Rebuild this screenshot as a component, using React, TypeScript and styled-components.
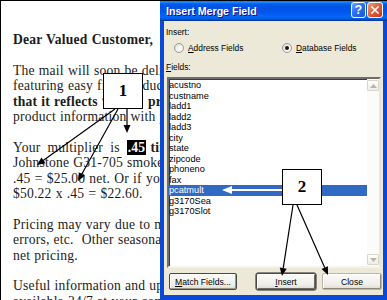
import styled, { createGlobalStyle } from 'styled-components';

const GlobalStyle = createGlobalStyle`
  html, body { margin: 0; padding: 0; background: #fff; }
  body { width: 387px; height: 300px; overflow: hidden; }
`;

const fields = [
  'acustno', 'custname', 'ladd1', 'ladd2', 'ladd3', 'city', 'state',
  'zipcode', 'phoneno', 'fax', 'pcatmult', 'g3170Sea', 'g3170Slot',
];
const selected = 'pcatmult';

type Arrow = { x1: number, y1: number, x2: number, y2: number, white?: boolean };

const arrows: Arrow[] = [
  { x1: 115, y1: 109, x2: 37, y2: 165 },
  { x1: 118, y1: 109, x2: 78, y2: 181 },
  { x1: 127, y1: 109, x2: 127, y2: 133 },
  { x1: 293, y1: 205, x2: 282, y2: 276 },
  { x1: 297, y1: 205, x2: 328, y2: 275 },
  { x1: 282, y1: 190, x2: 222, y2: 190, white: true },
];

// arrow head triangle + where the shaft stops
const headOf = ({ x1, y1, x2, y2 }: Arrow, len = 8, w = 3.5) => {
  const a = Math.atan2(y2 - y1, x2 - x1);
  const bx = x2 - len * Math.cos(a);
  const by = y2 - len * Math.sin(a);
  const px = -Math.sin(a) * w;
  const py = Math.cos(a) * w;
  return { bx, by, points: `${x2},${y2} ${bx + px},${by + py} ${bx - px},${by - py}` };
};

export default function App() {
  return (
    <>
      <GlobalStyle />
      <Screen>
        <Letter>
          <Para><Bold>Dear Valued Customer,</Bold></Para>
          <Para>
            <Line>The mail will soon be delivering our new catalog</Line>
            <Line>featuring easy find product pages. We have made sure</Line>
            <Line><Bold>that it reflects “your” pricing</Bold> by including</Line>
            <Line>product information with your multiplier.</Line>
          </Para>
          <Para>
            <Line $spread={3.5}>Your multiplier is <Highlight>.45</Highlight><Bold> times</Bold> the list price. For example:</Line>
            <Line>Johnstone G31-705 smoke detector lists for $55.78 x</Line>
            <Line>.45 = $25.00 net. Or if your item lists for</Line>
            <Line>$50.22 x .45 = $22.60.</Line>
          </Para>
          <Para>
            <Line>Pricing may vary due to market fluctuation, printing</Line>
            <Line>errors, etc.  Other seasonal promotions may affect</Line>
            <Line>net pricing.</Line>
          </Para>
          <Para>
            <Line>Useful information and updates on our website are</Line>
            <Line>available 24/7 at your convenience.</Line>
          </Para>
        </Letter>

        <Dialog>
          <TitleBar>
            <Title>Insert Merge Field</Title>
            <HelpButton>?</HelpButton>
            <CloseButton>
              <svg width="8" height="8" viewBox="0 0 8 8">
                <path d="M1 1 L7 7 M7 1 L1 7" stroke="#fff" strokeWidth="1.6" strokeLinecap="square" />
              </svg>
            </CloseButton>
          </TitleBar>
          <Body>
            <Label>Insert:</Label>
            <RadioRow>
              <RadioItem $width={108}>
                <Radio />
                <span><u>A</u>ddress Fields</span>
              </RadioItem>
              <RadioItem>
                <Radio $checked />
                <span><u>D</u>atabase Fields</span>
              </RadioItem>
            </RadioRow>
            <FieldsLabel><u>F</u>ields:</FieldsLabel>
            <ListBox>
              <Items>
                {fields.map((f) => (
                  <Item key={f} $selected={f === selected}>{f}</Item>
                ))}
              </Items>
              <ScrollBar>
                <ScrollButton>
                  <svg width="7" height="4" viewBox="0 0 7 4"><path d="M0 4 L3.5 0 L7 4 Z" fill="#b8b5a8" /></svg>
                </ScrollButton>
                <Track />
                <ScrollButton>
                  <svg width="7" height="4" viewBox="0 0 7 4"><path d="M0 0 L3.5 4 L7 0 Z" fill="#b8b5a8" /></svg>
                </ScrollButton>
              </ScrollBar>
            </ListBox>
            <ButtonRow>
              <Button $width={68}><u>M</u>atch Fields...</Button>
              <Spacer />
              <Button $width={60} $default><u>I</u>nsert</Button>
              <Button $width={60} $soft>Close</Button>
            </ButtonRow>
          </Body>
        </Dialog>

        <Overlay width="387" height="300" viewBox="0 0 387 300">
          {arrows.map((a, i) => {
            const h = headOf(a, a.white ? 10 : 8, a.white ? 4 : 3.5);
            const c = a.white ? '#fff' : '#000';
            return (
              <g key={i}>
                <line x1={a.x1} y1={a.y1} x2={h.bx} y2={h.by} stroke={c} strokeWidth={a.white ? 2 : 1.2} />
                <polygon points={h.points} fill={c} />
              </g>
            );
          })}
        </Overlay>
        <Callout $x={103} $y={73}>1</Callout>
        <Callout $x={282} $y={169}>2</Callout>
      </Screen>
    </>
  );
}

const Screen = styled.div`
  position: relative;
  display: flex;
  width: 387px;
  height: 300px;
  box-sizing: border-box;
  border-top: 1px solid #000;
  border-left: 1px solid #000;
  overflow: hidden;
`;

const Letter = styled.div`
  flex: none;
  width: 159px;
  box-sizing: border-box;
  overflow: hidden;
  padding: 31px 0 0 12px;
  background: #fff;
  color: #1c1c1c;
  font-family: "Liberation Serif", "Times New Roman", serif;
  font-size: 13.6px;
  line-height: 15.4px;
  letter-spacing: 0.2px;
  word-spacing: 0.5px;
`;

const Para = styled.p`
  margin: 0 0 15.4px;
`;

const Line = styled.span<{ $spread?: number }>`
  display: block;
  white-space: pre;
  word-spacing: ${(p) => (p.$spread ? `${p.$spread}px` : 'inherit')};
`;

const Bold = styled.b`
  font-weight: bold;
  word-spacing: 0.5px;
`;

const Highlight = styled.b`
  background: #000;
  color: #fff;
  padding: 0 1px;
`;

const Dialog = styled.div`
  flex: 1;
  display: flex;
  flex-direction: column;
  min-width: 0;
`;

const TitleBar = styled.div`
  height: 20px;
  display: flex;
  align-items: flex-start;
  gap: 1px;
  padding: 0 4px 0 6px;
  background: linear-gradient(180deg, #0058ee 0%, #3593ff 4%, #288eff 6%, #127dff 8%, #036ffc 10%, #0262ee 14%, #0057e5 20%, #0054e3 24%, #0055eb 56%, #005bf5 66%, #026afe 76%, #0062ef 86%, #0052d6 92%, #0040ab 94%, #003092 100%);
`;

const Title = styled.span`
  flex: 1;
  color: #fff;
  font-family: "Liberation Sans", Arial, sans-serif;
  font-weight: bold;
  font-size: 10.6px;
  line-height: 21px;
  text-shadow: 1px 1px #0f1089;
`;

const TitleButton = styled.div`
  margin-top: 1px;
  height: 16px;
  box-sizing: border-box;
  border: 1px solid #fff;
  border-radius: 3px;
  display: flex;
  align-items: center;
  justify-content: center;
`;

const HelpButton = styled(TitleButton)`
  width: 15px;
  background: linear-gradient(135deg, #6ea6ff 0%, #2b6ff0 45%, #1a55d8 100%);
  color: #fff;
  font-family: "Liberation Sans", Arial, sans-serif;
  font-weight: bold;
  font-size: 12px;
`;

const CloseButton = styled(TitleButton)`
  width: 16px;
  background: linear-gradient(135deg, #f0a080 0%, #e0603c 45%, #c43c1a 100%);
`;

const Body = styled.div`
  flex: 1;
  display: flex;
  flex-direction: column;
  background: #ece9d8;
  border-style: solid;
  border-color: #0a49d8;
  border-width: 0 4px 5px 4px;
  padding: 6px 0 5px 2px;
  font-family: "Liberation Sans", Arial, sans-serif;
  font-size: 8.4px;
  color: #000;
`;

const Label = styled.div`
  line-height: 11px;
  height: 11px;
`;

const FieldsLabel = styled(Label)`
  margin-top: 9px;
`;

const RadioRow = styled.div`
  display: flex;
  align-items: center;
  margin-top: 4px;
  height: 11px;
  padding-left: 8px;
`;

const RadioItem = styled.label<{ $width?: number }>`
  display: flex;
  align-items: center;
  gap: 4px;
  width: ${(p) => (p.$width ? `${p.$width}px` : 'auto')};
`;

const Radio = styled.span<{ $checked?: boolean }>`
  position: relative;
  width: 10px;
  height: 10px;
  box-sizing: border-box;
  border-radius: 50%;
  border: 1px solid #9a9a9a;
  background: radial-gradient(circle at 65% 65%, #fff 0%, #f0efea 50%, #cfcdc4 100%);
  &::after {
    content: '';
    display: ${(p) => (p.$checked ? 'block' : 'none')};
    position: absolute;
    left: 2px;
    top: 2px;
    width: 4px;
    height: 4px;
    border-radius: 50%;
    background: #1a1a1a;
  }
`;

const ListBox = styled.div`
  display: flex;
  height: 191px;
  margin: 4px 2px 0 1px;
  box-sizing: border-box;
  background: #fff;
  border-style: solid;
  border-width: 2px;
  border-color: #6e6e6e #e8e6dc #f4f3ee #6e6e6e;
  box-shadow: inset 1px 1px #3c3c3c;
`;

const Items = styled.div`
  flex: 1;
  padding-top: 1px;
`;

const Item = styled.div<{ $selected?: boolean }>`
  height: 10.5px;
  line-height: 10.5px;
  padding-left: 1px;
  margin-left: -1px;
  font-size: 9.2px;
  white-space: nowrap;
  background: ${(p) => (p.$selected ? '#316ac5' : 'transparent')};
  color: ${(p) => (p.$selected ? '#fff' : '#000')};
`;

const ScrollBar = styled.div`
  width: 12px;
  display: flex;
  flex-direction: column;
  padding: 1px 0;
  background: #fbfbf9;
`;

const ScrollButton = styled.div`
  height: 11px;
  box-sizing: border-box;
  border: 1px solid #d8d6cc;
  border-radius: 1px;
  background: linear-gradient(180deg, #fdfdfb, #eeede6);
  display: flex;
  align-items: center;
  justify-content: center;
`;

const Track = styled.div`
  flex: 1;
`;

const ButtonRow = styled.div`
  display: flex;
  gap: 6px;
  margin-top: 5px;
  height: 17px;
  padding: 0 1px 0 3px;
`;

const Spacer = styled.div`
  flex: 1;
`;

const Button = styled.div<{ $width: number, $default?: boolean, $soft?: boolean }>`
  width: ${(p) => p.$width}px;
  height: 17px;
  box-sizing: border-box;
  display: flex;
  align-items: center;
  justify-content: center;
  font-size: 8.6px;
  border-radius: 2px;
  background: linear-gradient(180deg, #fbfbf8 0%, #efeee8 70%, #dedbd0 100%);
  border: 1px solid ${(p) => (p.$soft ? '#b9b6ab' : '#4a4a46')};
  box-shadow: ${(p) => (p.$default
    ? 'inset 1px 1px #fff, inset -1px -1px #6c6a62, 0 0 0 0.5px #222'
    : p.$soft ? 'inset -1px -1px #8a877d, inset 1px 1px #fff' : 'inset -1px -1px #9a978c, inset 1px 1px #fff')};
`;

const Overlay = styled.svg`
  position: absolute;
  left: -1px;
  top: -1px;
  pointer-events: none;
`;

const Callout = styled.div<{ $x: number, $y: number }>`
  position: absolute;
  left: ${(p) => p.$x - 1}px;
  top: ${(p) => p.$y - 1}px;
  width: 40px;
  height: 36px;
  box-sizing: border-box;
  border: 1px solid #000;
  background: #fff;
  display: flex;
  align-items: center;
  justify-content: center;
  font-family: "Liberation Serif", "Times New Roman", serif;
  font-weight: bold;
  font-size: 17px;
  color: #000;
`;
